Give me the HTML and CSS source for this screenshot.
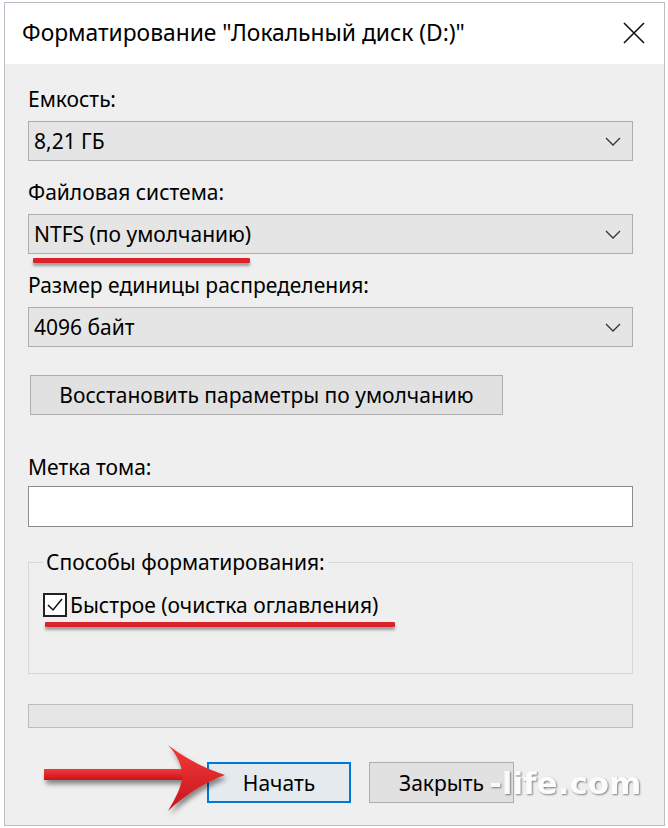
FILE: index.html
```html
<!DOCTYPE html>
<html lang="ru">
<head>
  <meta charset="UTF-8">
  <meta name="viewport" content="width=device-width, initial-scale=1">
  <title>Форматирование</title>
  <link rel="stylesheet" href="styles.css">
</head>
<body>
  <div class="window">
    <div class="titlebar">
      <span class="title">Форматирование "Локальный диск (D:)"</span>
      <svg class="close" width="22" height="22" viewBox="0 0 22 22">
        <path d="M1 1 L21 21 M21 1 L1 21" stroke="#111" stroke-width="1.6" fill="none"/>
      </svg>
    </div>

    <div class="content">
      <div class="label">Емкость:</div>
      <div class="select">
        <span>8,21 ГБ</span>
        <svg class="chevron" width="16" height="9" viewBox="0 0 16 9"><polyline points="1,1 8,8 15,1" fill="none" stroke="#333" stroke-width="1.3"/></svg>
      </div>

      <div class="label">Файловая система:</div>
      <div class="select">
        <span>NTFS (по умолчанию)</span>
        <svg class="chevron" width="16" height="9" viewBox="0 0 16 9"><polyline points="1,1 8,8 15,1" fill="none" stroke="#333" stroke-width="1.3"/></svg>
        <div class="mark mark-fs"></div>
      </div>

      <div class="label">Размер единицы распределения:</div>
      <div class="select">
        <span>4096 байт</span>
        <svg class="chevron" width="16" height="9" viewBox="0 0 16 9"><polyline points="1,1 8,8 15,1" fill="none" stroke="#333" stroke-width="1.3"/></svg>
      </div>

      <button class="btn btn-restore">Восстановить параметры по умолчанию</button>

      <div class="label label-volume">Метка тома:</div>
      <div class="textbox"></div>

      <fieldset class="group">
        <legend>Способы форматирования:</legend>
        <div class="check-row">
          <span class="checkbox">
            <svg width="20" height="20" viewBox="0 0 20 20"><polyline points="3,10 8,15 17,4" fill="none" stroke="#111" stroke-width="1.5"/></svg>
          </span>
          <span>Быстрое (очистка оглавления)</span>
          <div class="mark mark-quick"></div>
        </div>
      </fieldset>

      <div class="progress"></div>

      <div class="actions">
        <button class="btn btn-start">Начать</button>
        <button class="btn">Закрыть</button>
      </div>
    </div>

    <!-- стрелка и водяной знак поверх диалога -->
    <svg class="arrow" width="192" height="76" viewBox="0 0 192 76">
      <defs>
        <linearGradient id="red" x1="0" y1="0" x2="0" y2="1">
          <stop offset="0" stop-color="#f5393a"/>
          <stop offset="1" stop-color="#c4161c"/>
        </linearGradient>
        <filter id="shadow" x="-10%" y="-20%" width="130%" height="150%">
          <feDropShadow dx="2" dy="4" stdDeviation="2.5" flood-color="#000" flood-opacity="0.45"/>
        </filter>
      </defs>
      <g fill="url(#red)" filter="url(#shadow)">
        <rect x="3" y="27" width="140" height="11"/>
        <path d="M127,3 C145,17 165,27 184,33 C165,40 145,52 127,69 C135,55 141,45 141,33 C141,22 135,12 127,3 Z"/>
      </g>
    </svg>
    <div class="watermark">-life.com</div>
  </div>
</body>
</html>
```

FILE: styles.css
```css
* { box-sizing: border-box; margin:0; padding:0; }
body { background:#fff; font-family: "Noto Sans", "Open Sans", sans-serif; color:#000; }

.window { position:relative; margin:2px 0 0 4px; width:661px; height:824px; border:1px solid #b9bec4; background:#fff; display:flex; flex-direction:column; }
.titlebar { height:61px; display:flex; align-items:center; justify-content:space-between; padding:0 19px 0 17px; background:#fff; }
.title { font-size:22.8px; margin-top:-2px; }
.close { display:block; margin-top:-2px; }

.content { flex:1; background:#efefef; padding:22px 31px 0 23px; display:flex; flex-direction:column; align-items:flex-start; }
.label { font-size:21px; line-height:26px; margin-bottom:9px; }
.label-volume { margin-top:39px; margin-bottom:6px; }

.select { position:relative; width:605px; height:40px; border:1px solid #adadad; background:#e5e5e5; display:flex; align-items:center; justify-content:space-between; padding:0 11px 0 5px; font-size:21px; margin-bottom:18px; }
.chevron { display:block; }

.mark { position:absolute; height:5px; background:#d92229; box-shadow:0 3px 3px rgba(0,0,0,.35); border-radius:1px; }
.mark-fs { left:4px; top:43px; width:217px; }
.mark-quick { left:2px; top:29px; width:350px; }

.btn { font-family:inherit; font-size:21px; color:#000; background:#e1e1e1; border:1px solid #adadad; width:145px; height:41px; }
.btn-restore { width:473px; height:40px; margin:10px 0 0 2px; }

.textbox { width:605px; height:41px; background:#fff; border:1px solid #8c8c8c; }

.group { width:605px; margin-top:22px; border:1px solid #d7d7d7; padding:0 0 56px 14px; }
.group legend { font-size:21px; line-height:26px; padding:0 3px; }
.check-row { position:relative; margin-top:18px; display:flex; align-items:center; gap:3px; font-size:21px; height:24px; }
.checkbox { width:24px; height:24px; border:2px solid #222; background:#fff; display:flex; align-items:center; justify-content:center; }

.progress { width:605px; height:24px; margin-top:30px; background:#e6e6e6; border:1px solid #bcbcbc; }

.actions { display:flex; gap:18px; margin:34px 0 0 179px; }
.btn-start { border:2px solid #0078d7; background:#e5eaee; width:144px; }

.arrow { position:absolute; left:36px; top:739px; }
.watermark { position:absolute; left:484px; top:762px; font-family:"DejaVu Sans", sans-serif; font-weight:bold; font-size:31px; color:#fff; text-shadow:1px 1px 2px rgba(0,0,0,.55); opacity:.85; }
```
